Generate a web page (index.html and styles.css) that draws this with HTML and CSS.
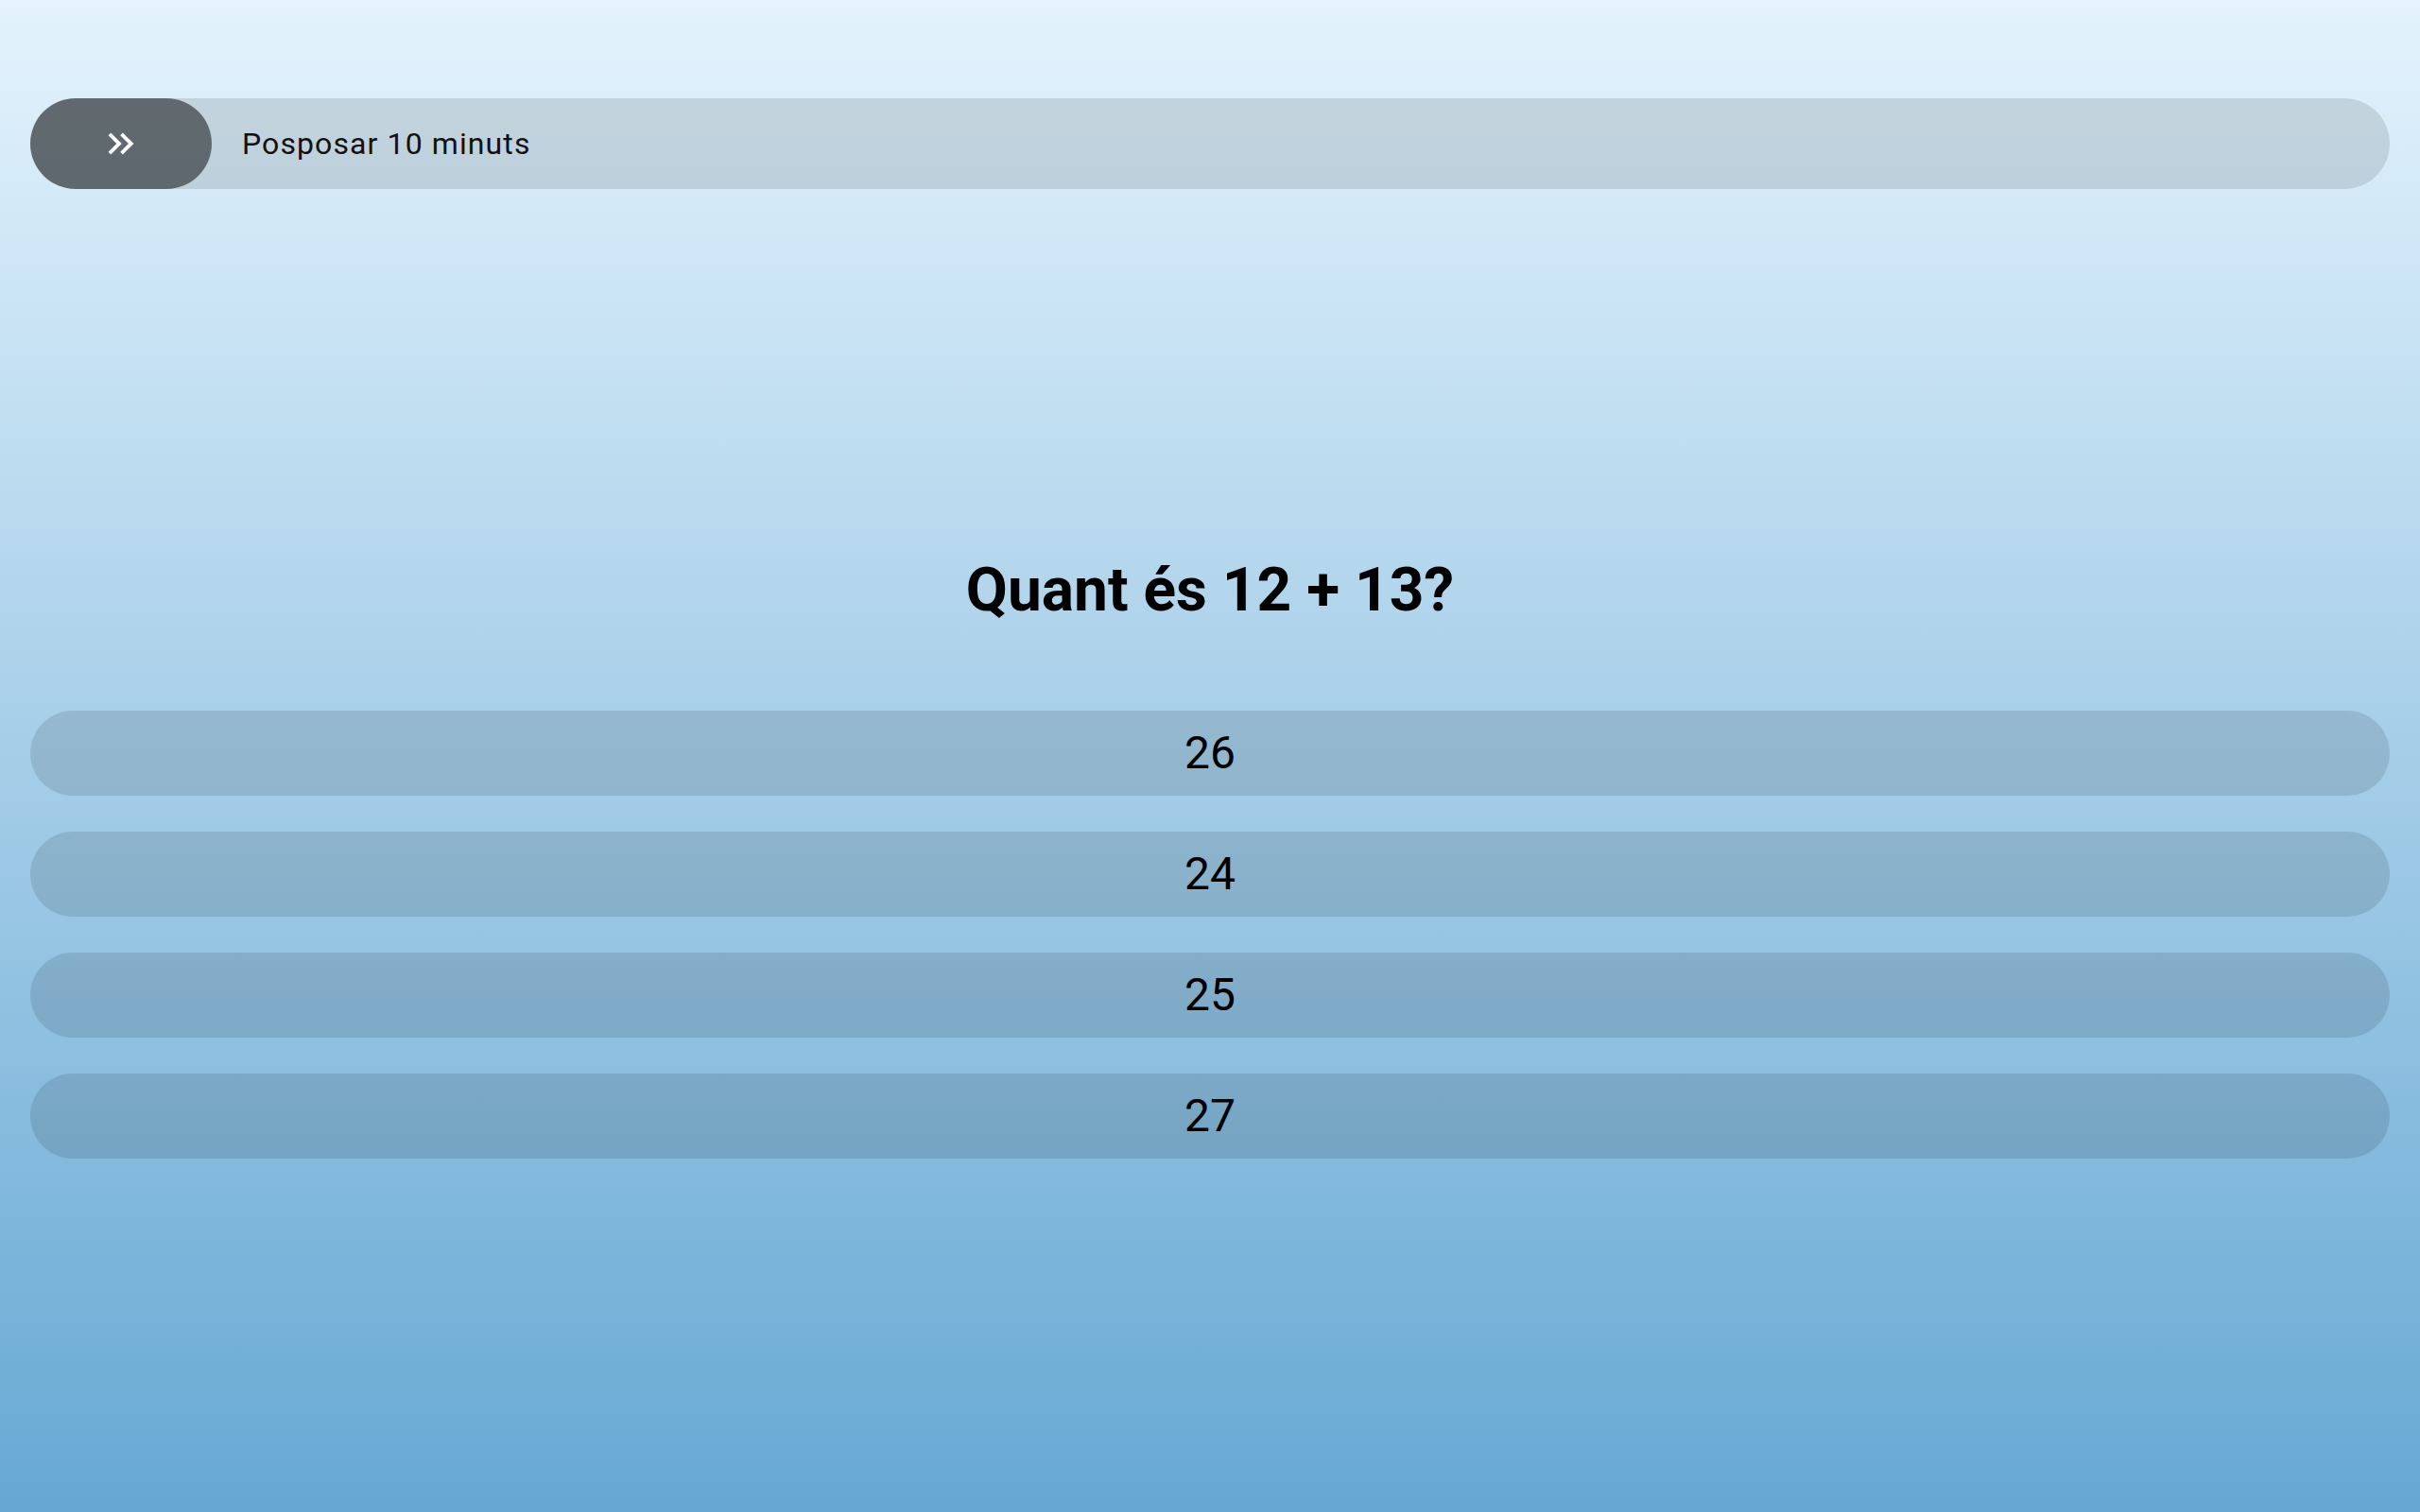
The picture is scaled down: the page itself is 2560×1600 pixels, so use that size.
FILE: index.html
```html
<!DOCTYPE html>
<html lang="ca">
<head>
<meta charset="utf-8">
<title>Alarma</title>
<link rel="stylesheet" href="styles.css">
</head>
<body>
<main class="screen">
  <div class="snooze">
    <div class="snooze-handle">
      <svg class="snooze-icon" viewBox="0 0 24 24" aria-hidden="true">
        <path d="M6.41 6 5 7.41 9.58 12 5 16.59 6.41 18l6-6z"/>
        <path d="M13 6l-1.41 1.41L16.17 12l-4.58 4.59L13 18l6-6z"/>
      </svg>
    </div>
    <span class="snooze-label">Posposar 10 minuts</span>
  </div>
  <h1 class="question">Quant és 12 + 13?</h1>
  <div class="answers">
    <button class="answer">26</button>
    <button class="answer">24</button>
    <button class="answer">25</button>
    <button class="answer">27</button>
  </div>
</main>
</body>
</html>
```

FILE: styles.css
```css
html, body {
  margin: 0;
  padding: 0;
  height: 100%;
}

body {
  font-family: Roboto, "Liberation Sans", sans-serif;
  color: #000;
  background: linear-gradient(to bottom, #e4f3fd 0%, #66a8d3 100%);
  min-height: 1600px;
}

.screen {
  display: flex;
  flex-direction: column;
  padding: 104px 32px 0;
}

.snooze {
  display: flex;
  align-items: center;
  height: 96px;
  border-radius: 48px;
  background: rgba(0, 0, 0, 0.11);
}

.snooze-handle {
  width: 192px;
  height: 96px;
  border-radius: 48px;
  background: rgba(0, 0, 0, 0.5);
  display: flex;
  align-items: center;
  justify-content: center;
  flex: none;
}

.snooze-icon {
  width: 46px;
  height: 46px;
  fill: #fff;
}

.snooze-label {
  margin-left: 32px;
  font-size: 32px;
  letter-spacing: 1.1px;
  color: #111;
}

.question {
  margin: 393px 0 0;
  font-size: 64px;
  line-height: 64px;
  font-weight: 700;
  text-align: center;
}

.answers {
  display: flex;
  flex-direction: column;
  gap: 38px;
  margin-top: 95px;
}

.answer {
  display: flex;
  align-items: center;
  justify-content: center;
  height: 90px;
  border: none;
  border-radius: 45px;
  background: rgba(0, 0, 0, 0.11);
  font-family: Roboto, "Liberation Sans", sans-serif;
  font-size: 48px;
  color: #000;
  padding: 0 0 2px;
}
```
